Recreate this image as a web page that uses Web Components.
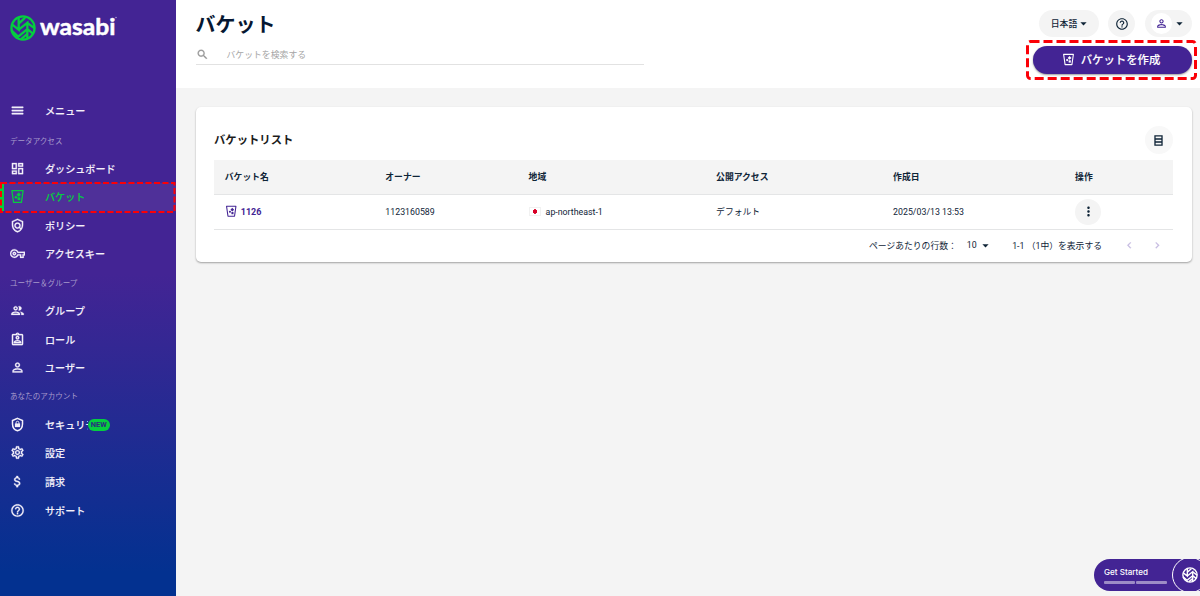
<!DOCTYPE html>
<html lang="ja">
<head>
<meta charset="utf-8">
<title>Wasabi</title>
<style>
  html, body { height: 100%; }
  body {
    margin: 0;
    overflow: hidden;
    background: #f4f4f4;
    color: #0f2437;
    font-family: Roboto, 'Noto Sans CJK JP', sans-serif;
    font-size: 8.8px;
  }
</style>
</head>
<body>
<console-app></console-app>

<script>
const icons = {
  menu: '<path d="M3 18h18v-2H3v2zm0-5h18v-2H3v2zm0-7v2h18V6H3z"/>',
  dashboard: '<path d="M19 5v2h-4V5h4M9 5v6H5V5h4m10 8v6h-4v-6h4M9 17v2H5v-2h4M21 3h-8v6h8V3zM11 3H3v10h8V3zm10 8h-8v10h8V11zm-10 4H3v6h8v-6z"/>',
  bucket: '<path fill="none" stroke="currentColor" stroke-width="2" stroke-linejoin="round" d="M3 2.500h18l-2.700 19H5.700z"/><path d="M14 5.500l3.500 3.500-3.500 3.500-3.500-3.500z"/><circle cx="9.500" cy="13" r="2"/><path d="M12.300 13.500h4v4.200h-4z"/>',
  policy: '<path d="M12 1L3 5v6c0 5.550 3.840 10.740 9 12 5.160-1.260 9-6.450 9-12V5l-9-4zm7 10c0 1.850-.51 3.650-1.380 5.210l-1.450-1.450c1.290-1.940 1.070-4.580-.64-6.290-1.950-1.950-5.120-1.950-7.070 0-1.950 1.950-1.950 5.120 0 7.070 1.710 1.710 4.350 1.920 6.290.64l1.720 1.720c-1.190 1.420-2.730 2.510-4.470 3.040C7.980 19.690 5 15.520 5 11V6.300l7-3.110 7 3.110V11zm-7 4c-1.660 0-3-1.340-3-3s1.340-3 3-3 3 1.340 3 3-1.340 3-3 3z"/>',
  key: '<path d="M22 19h-6v-4h-2.680c-1.140 2.420-3.600 4-6.320 4-3.860 0-7-3.140-7-7s3.140-7 7-7c2.720 0 5.170 1.580 6.320 4H24v6h-2v4zm-4-2h2v-4h2v-2H11.940l-.23-.67C11.010 8.340 9.110 7 7 7c-2.760 0-5 2.240-5 5s2.240 5 5 5c2.110 0 4.010-1.340 4.710-3.330l.23-.67H18v4zM7 15c-1.650 0-3-1.350-3-3s1.350-3 3-3 3 1.350 3 3-1.350 3-3 3zm0-4c-.55 0-1 .45-1 1s.45 1 1 1 1-.45 1-1-.45-1-1-1z"/>',
  group: '<path d="M9 13.750c-2.340 0-7 1.170-7 3.500V19h14v-1.750c0-2.330-4.660-3.500-7-3.500zM4.340 17c.84-.58 2.870-1.250 4.660-1.250s3.820.67 4.660 1.250H4.340zM9 12c1.930 0 3.500-1.570 3.500-3.500S10.930 5 9 5 5.500 6.570 5.500 8.500 7.070 12 9 12zm0-5c.83 0 1.500.67 1.500 1.500S9.830 10 9 10s-1.500-.67-1.500-1.500S8.170 7 9 7zm7.040 6.810c1.160.84 1.960 1.960 1.960 3.440V19h4v-1.750c0-2.020-3.500-3.170-5.960-3.440zM15 12c1.930 0 3.500-1.570 3.500-3.500S16.930 5 15 5c-.54 0-1.040.13-1.500.35.63.89 1 1.980 1 3.150s-.37 2.260-1 3.150c.46.22.96.35 1.500.35z"/>',
  role: '<path d="M19 3h-4.180C14.400 1.840 13.300 1 12 1s-2.400.84-2.820 2H5c-1.100 0-2 .9-2 2v14c0 1.100.9 2 2 2h14c1.100 0 2-.9 2-2V5c0-1.100-.9-2-2-2zm-7-.25c.22 0 .41.1.55.25.12.13.2.31.2.500 0 .41-.34.750-.750.750s-.750-.34-.750-.750c0-.19.080-.37.2-.5.14-.15.33-.25.55-.25zM19 19H5V5h14v14zM12 6c-1.650 0-3 1.350-3 3s1.350 3 3 3 3-1.350 3-3-1.350-3-3-3zm0 4c-.55 0-1-.45-1-1s.45-1 1-1 1 .45 1 1-.45 1-1 1zm-6 6.470V18h12v-1.530c0-2.500-3.970-3.580-6-3.580s-6 1.070-6 3.580zM8.310 16c.69-.56 2.380-1.120 3.690-1.120s3.010.56 3.690 1.120H8.310z"/>',
  user: '<path d="M12 6c1.100 0 2 .9 2 2s-.9 2-2 2-2-.9-2-2 .9-2 2-2m0 9c2.700 0 5.800 1.290 6 2v1H6v-.99c.2-.72 3.300-2.010 6-2.010m0-11C9.790 4 8 5.790 8 8s1.790 4 4 4 4-1.790 4-4-1.790-4-4-4zm0 9c-2.670 0-8 1.340-8 4v3h16v-3c0-2.660-5.330-4-8-4z"/>',
  security: '<path fill="none" stroke="currentColor" stroke-width="2.4" d="M12 2.100l8 3.550V11c0 5-3.400 9.600-8 10.900C7.400 20.600 4 16 4 11V5.650z"/><path d="M8 10.500h8V16H8z"/><path fill="none" stroke="currentColor" stroke-width="1.500" d="M9.800 11V9a2.200 2.200 0 0 1 4.400 0v2"/>',
  settings: '<path d="M19.430 12.980c.04-.32.070-.64.070-.98s-.03-.66-.07-.98l2.110-1.650c.19-.15.24-.42.12-.64l-2-3.460c-.12-.22-.39-.3-.61-.22l-2.490 1c-.52-.4-1.080-.73-1.690-.98l-.38-2.650C14.460 2.180 14.250 2 14 2h-4c-.25 0-.46.18-.49.42l-.38 2.650c-.61.25-1.170.59-1.690.98l-2.490-1c-.23-.09-.49 0-.61.22l-2 3.460c-.13.22-.07.49.12.64l2.110 1.650c-.04.32-.07.65-.07.98s.03.66.070.98l-2.110 1.650c-.19.15-.24.42-.12.64l2 3.460c.12.22.39.3.61.22l2.490-1c.52.4 1.080.73 1.690.98l.38 2.650c.03.24.24.42.49.42h4c.25 0 .46-.18.49-.42l.38-2.650c.61-.25 1.170-.59 1.690-.98l2.490 1c.23.09.49 0 .61-.22l2-3.460c.12-.22.07-.49-.12-.64l-2.110-1.650zm-1.980-1.710c.04.31.050.520.050.73s-.02.43-.05.73l-.14 1.130.89.7 1.080.84-.7 1.210-1.270-.51-1.040-.42-.9.680c-.43.32-.84.56-1.250.73l-1.060.43-.16 1.130-.2 1.350h-1.400l-.19-1.350-.16-1.130-1.060-.43c-.43-.18-.83-.41-1.230-.71l-.91-.7-1.060.43-1.270.51-.7-1.210 1.080-.84.89-.7-.14-1.130c-.03-.31-.05-.54-.05-.74s.02-.43.05-.73l.14-1.130-.89-.7-1.080-.84.7-1.210 1.270.51 1.040.42.9-.68c.43-.32.84-.56 1.250-.73l1.060-.43.16-1.130.2-1.350h1.390l.19 1.350.16 1.130 1.060.43c.43.18.83.41 1.230.71l.91.7 1.060-.43 1.270-.51.7 1.210-1.070.85-.89.7.14 1.130zM12 8c-2.210 0-4 1.790-4 4s1.790 4 4 4 4-1.790 4-4-1.790-4-4-4zm0 6c-1.100 0-2-.9-2-2s.9-2 2-2 2 .9 2 2-.9 2-2 2z"/>',
  billing: '<path d="M11.800 10.900c-2.270-.59-3-1.200-3-2.150 0-1.090 1.010-1.850 2.700-1.850 1.780 0 2.440.85 2.500 2.100h2.210c-.07-1.720-1.120-3.300-3.210-3.810V3h-3v2.160c-1.940.42-3.500 1.680-3.500 3.610 0 2.310 1.910 3.460 4.700 4.130 2.500.6 3 1.480 3 2.410 0 .69-.49 1.790-2.700 1.790-2.060 0-2.870-.92-2.980-2.100h-2.200c.12 2.190 1.760 3.420 3.680 3.830V21h3v-2.150c1.950-.37 3.500-1.500 3.500-3.550 0-2.840-2.430-3.810-4.700-4.400z"/>',
  help: '<path d="M11 18h2v-2h-2v2zm1-16C6.480 2 2 6.480 2 12s4.480 10 10 10 10-4.480 10-10S17.520 2 12 2zm0 18c-4.410 0-8-3.590-8-8s3.590-8 8-8 8 3.590 8 8-3.590 8-8 8zm0-14c-2.210 0-4 1.790-4 4h2c0-1.100.9-2 2-2s2 .9 2 2c0 2-3 1.750-3 5h2c0-2.250 3-2.500 3-5 0-2.210-1.790-4-4-4z"/>',
  search: '<path d="M15.500 14h-.79l-.28-.27C15.410 12.590 16 11.110 16 9.500 16 5.910 13.090 3 9.500 3S3 5.910 3 9.500 5.910 16 9.500 16c1.610 0 3.090-.59 4.230-1.570l.27.28v.79l5 4.990L20.490 19l-4.990-5zm-6 0C7.010 14 5 11.990 5 9.500S7.010 5 9.500 5 14 7.010 14 9.500 11.990 14 9.500 14z"/>',
  caret: '<path d="M7 10l5 5 5-5z"/>',
  rows: '<path fill="none" stroke="currentColor" stroke-width="2.4" d="M5.500 3.500h13v17h-13zM5.500 9.200h13M5.500 14.800h13"/>',
  more: '<path d="M12 8c1.100 0 2-.9 2-2s-.9-2-2-2-2 .9-2 2 .9 2 2 2zm0 2c-1.100 0-2 .9-2 2s.9 2 2 2 2-.9 2-2-.9-2-2-2zm0 6c-1.100 0-2 .9-2 2s.9 2 2 2 2-.9 2-2-.9-2-2-2z"/>',
  prev: '<path d="M15.410 7.410L14 6l-6 6 6 6 1.410-1.410L10.830 12z"/>',
  next: '<path d="M10 6L8.590 7.410 13.170 12l-4.580 4.590L10 18l6-6z"/>',
  leaf: '<g fill="none" stroke="currentColor" stroke-width="2.100"><circle cx="12" cy="12" r="10.700"/><path d="M1.500 8.500l6.500 5V2.500M8 8l6-5.500M1.500 14.500l6 5.500 8.500-7M8 13.500l8-6.300v14.500M16 7.200l6.500 5M16 13l5.500 4.500M10.500 22l5.500-4.500"/></g>'
};

class UiIcon extends HTMLElement {
  constructor() {
    super();
    this.attachShadow({ mode: 'open' });
  }

  connectedCallback() {
    this.shadowRoot.innerHTML = `
      <style>
        :host { display: inline-block; flex: none; width: var(--size, 14px); height: var(--size, 14px); }
        svg {
          display: block;
          width: 100%;
          height: 100%;
          fill: currentColor;
          stroke: currentColor;
          stroke-width: var(--bold, 0);
        }
      </style>
      <svg viewBox="0 0 24 24">${icons[this.getAttribute('name')]}</svg>
    `;
  }
}
customElements.define('ui-icon', UiIcon);

// Defines an element whose shadow root is cloned from the given markup
function define(name, html) {
  const template = document.createElement('template');
  template.innerHTML = html;

  customElements.define(name, class extends HTMLElement {
    constructor() {
      super();
      this.attachShadow({ mode: 'open' });
      this.shadowRoot.appendChild(template.content.cloneNode(true));
    }
  });
}

define('brand-logo', `
  <style>
    :host { display: flex; align-items: center; height: 28px; padding: 13.5px 0 .5px 10px; color: #fff; }
    ui-icon { --size: 26px; color: #05ce3f; }
    svg { display: block; margin-left: 3px; overflow: visible; }
    text {
      font-family: Lato, sans-serif;
      font-weight: 700;
      fill: #fff;
      stroke: #fff;
      stroke-width: .5;
      stroke-linejoin: round;
    }
  </style>
  <ui-icon name="leaf"></ui-icon>
  <svg width="80" height="28">
    <text x="1" y="20.5" font-size="23" textLength="75.5" lengthAdjust="spacingAndGlyphs">wasabi</text>
    <circle cx="77" cy="3.5" r=".8" fill="#a99bd0"/>
  </svg>
`);

define('nav-label', `
  <style>
    :host {
      display: flex;
      align-items: center;
      height: 28.5px;
      padding-left: 10px;
      font-size: 7.55px;
      color: #a69acb;
    }
  </style>
  <slot></slot>
`);

define('nav-item', `
  <style>
    :host {
      display: flex;
      align-items: center;
      box-sizing: border-box;
      position: relative;
      height: 28.4px;
      padding-left: 10px;
      font-size: 10.1px;
      font-weight: 500;
      color: #f3f0fa;
      white-space: nowrap;
      -webkit-text-stroke: .1px currentColor;
      --bold: .4;
    }
    :host([active]) {
      color: #05ce3f;
      background: #4f3099;
    }
    :host([active])::before {
      content: '';
      position: absolute;
      left: 0;
      top: 0;
      bottom: 0;
      width: 4px;
      background: #05ce3f;
    }
    ::slotted(ui-icon) { --size: 15px; margin-right: 20px; }
    ::slotted(.new) {
      position: absolute;
      left: 87.5px;
      top: 9px;
      width: 22.5px;
      height: 11.5px;
      border-radius: 6px;
      background: #05ce3f;
      color: #2b2c80;
      font: 700 7.4px/12px Roboto, sans-serif;
      text-align: center;
      -webkit-text-stroke: 0;
    }
  </style>
  <slot name="icon"></slot>
  <slot></slot>
  <slot name="badge"></slot>
`);

define('side-nav', `
  <style>
    :host {
      display: block;
      position: relative;
      width: 176px;
      height: 596px;
      box-sizing: border-box;
      background: linear-gradient(#432494 0, #432494 46%, #033190 96%);
    }
    nav { display: flex; flex-direction: column; padding-top: 54px; }
    .hit {
      position: absolute;
      left: 1px;
      top: 182px;
      z-index: 1;
      overflow: visible;
    }
    .clip { display: inline-block; width: 42.5px; overflow: hidden; }
    .menu { margin-bottom: 1.5px; --bold: .8; }
    .support { margin-top: 1.3px; }
  </style>
  <brand-logo></brand-logo>
  <nav>
    <nav-item class="menu"><ui-icon slot="icon" name="menu"></ui-icon>メニュー</nav-item>
    <nav-label>データアクセス</nav-label>
    <nav-item><ui-icon slot="icon" name="dashboard"></ui-icon>ダッシュボード</nav-item>
    <nav-item active><ui-icon slot="icon" name="bucket"></ui-icon>バケット</nav-item>
    <nav-item><ui-icon slot="icon" name="policy"></ui-icon>ポリシー</nav-item>
    <nav-item><ui-icon slot="icon" name="key"></ui-icon>アクセスキー</nav-item>
    <nav-label>ユーザー＆グループ</nav-label>
    <nav-item><ui-icon slot="icon" name="group"></ui-icon>グループ</nav-item>
    <nav-item><ui-icon slot="icon" name="role"></ui-icon>ロール</nav-item>
    <nav-item><ui-icon slot="icon" name="user"></ui-icon>ユーザー</nav-item>
    <nav-label>あなたのアカウント</nav-label>
    <nav-item><ui-icon slot="icon" name="security"></ui-icon><span class="clip">セキュリテ</span><span class="new" slot="badge">NEW</span></nav-item>
    <nav-item><ui-icon slot="icon" name="settings"></ui-icon>設定</nav-item>
    <nav-item><ui-icon slot="icon" name="billing"></ui-icon>請求</nav-item>
    <nav-item class="support"><ui-icon slot="icon" name="help"></ui-icon>サポート</nav-item>
  </nav>
  <svg class="hit" width="174" height="31">
    <rect x="0" y="1" width="173.5" height="29" fill="none" stroke="#fb0007" stroke-width="2" stroke-dasharray="6 2.5"/>
  </svg>
`);

define('pill-button', `
  <style>
    :host {
      display: flex;
      align-items: center;
      justify-content: center;
      box-sizing: border-box;
      height: 27px;
      border-radius: 14px;
      background: #f4f4f4;
      font-size: 8.8px;
      font-weight: 500;
    }
  </style>
  <slot></slot>
`);

define('create-button', `
  <style>
    :host { display: block; position: relative; width: 159px; height: 28px; }
    button {
      display: flex;
      align-items: center;
      justify-content: center;
      gap: 6px;
      width: 100%;
      height: 100%;
      padding: 0 2px 1px 0;
      border: 0;
      border-radius: 14px;
      background: #432494;
      box-shadow: 0 1px 2px rgba(0, 0, 0, .4);
      color: #fff;
      font: inherit;
      font-size: 11.4px;
      font-weight: 500;
      -webkit-text-stroke: .1px currentColor;
    }
    ui-icon { --size: 13px; }
    slot { display: block; margin-top: -1px; }
    svg { position: absolute; left: -7px; top: -6px; overflow: visible; }
  </style>
  <button><ui-icon name="bucket"></ui-icon><slot></slot></button>
  <svg width="171" height="40">
    <rect x="1.5" y="1.5" width="168" height="37" rx="3" fill="none" stroke="#fb0007" stroke-width="3" stroke-dasharray="9 4"/>
  </svg>
`);

define('page-header', `
  <style>
    :host {
      display: flex;
      justify-content: space-between;
      box-sizing: border-box;
      height: 88px;
      padding: 0 8.5px 0 19.5px;
      background: #fff;
    }
    h1 { margin: 10px 0 0; font-size: 20px; line-height: 30px; font-weight: 700; color: #061732; }
    .search {
      display: flex;
      align-items: center;
      gap: 18px;
      box-sizing: border-box;
      width: 448px;
      height: 19px;
      margin-top: 6px;
      padding-bottom: 1.5px;
      border-bottom: 1px solid #e2e2e2;
      color: #a6a6a6;
      font-size: 8.85px;
    }
    .search ui-icon { --size: 13px; --bold: .5; color: #969696; }
    .right { display: flex; flex-direction: column; align-items: flex-end; padding-top: 10px; }
    .tools { display: flex; gap: 9.5px; margin: 0 0 9px; }
    .lang { width: 60px; padding-left: 5px; }
    .lang ui-icon, .account > ui-icon { --size: 15px; }
    .lang ui-icon { margin-left: -1px; }
    .help { width: 27px; --size: 14px; }
    .account { width: 47px; justify-content: flex-start; }
    .avatar {
      display: flex;
      align-items: center;
      justify-content: center;
      width: 21px;
      height: 21px;
      margin: 0 0 0 6px;
      border-radius: 50%;
      background: #fff;
      color: #432494;
      --size: 13px;
    }
  </style>
  <div>
    <h1>バケット</h1>
    <div class="search"><ui-icon name="search"></ui-icon>バケットを検索する</div>
  </div>
  <div class="right">
    <div class="tools">
      <pill-button class="lang">日本語<ui-icon name="caret"></ui-icon></pill-button>
      <pill-button class="help"><ui-icon name="help"></ui-icon></pill-button>
      <pill-button class="account"><span class="avatar"><ui-icon name="user"></ui-icon></span><ui-icon name="caret"></ui-icon></pill-button>
    </div>
    <create-button>バケットを作成</create-button>
  </div>
`);

define('bucket-table', `
  <style>
    :host { display: block; }
    .row {
      display: grid;
      grid-template-columns: 160.5px 143.3px 187.5px 177px 182px 1fr;
      align-items: center;
      box-sizing: border-box;
      height: 35px;
      padding: 0 0 1px 10.8px;
      border-bottom: 1px solid #e4e5e6;
    }
    .head { background: #f4f4f4; font-weight: 700; }
    .cell { display: flex; align-items: center; }
    .name { color: #432494; font-weight: 700; font-size: 9px; gap: 3.5px; --size: 12.5px; }
    .flag {
      width: 10px;
      height: 7px;
      margin-right: 5px;
      background: radial-gradient(circle, #d80027 2px, #fff 2.5px);
      border: .5px solid #f1f1f1;
    }
    .more {
      display: flex;
      align-items: center;
      justify-content: center;
      width: 26px;
      height: 26px;
      border-radius: 50%;
      background: #f4f4f4;
      --size: 15px;
    }
  </style>
  <div class="row head">
    <span>バケット名</span><span>オーナー</span><span>地域</span><span>公開アクセス</span><span>作成日</span><span>操作</span>
  </div>
  <div class="row">
    <span class="cell name"><ui-icon name="bucket"></ui-icon>1126</span>
    <span>1123160589</span>
    <span class="cell"><i class="flag"></i>ap-northeast-1</span>
    <span>デフォルト</span>
    <span>2025/03/13 13:53</span>
    <span class="more"><ui-icon name="more"></ui-icon></span>
  </div>
`);

define('table-pager', `
  <style>
    :host { display: flex; align-items: center; justify-content: flex-end; height: 30px; padding-right: 9px; }
    .count { margin-left: 10px; }
    .caret { --size: 15px; margin: 0 19.5px 0 1px; }
    .arrows { display: flex; gap: 16px; margin-left: 20.5px; color: #c4bae0; --size: 12.5px; --bold: .5; }
  </style>
  <span>ページあたりの行数：</span>
  <span class="count">10</span>
  <ui-icon class="caret" name="caret"></ui-icon>
  <span>1-1 （1中）を表示する</span>
  <span class="arrows"><ui-icon name="prev"></ui-icon><ui-icon name="next"></ui-icon></span>
`);

define('bucket-card', `
  <style>
    :host {
      display: block;
      box-sizing: border-box;
      height: 155px;
      margin: 19px 8.5px 0 19.5px;
      padding: 19px 19px 0 18.5px;
      border-radius: 5px;
      background: #fff;
      box-shadow: 0 1px 2px rgba(0, 0, 0, .35);
    }
    header { display: flex; align-items: center; justify-content: space-between; height: 28px; margin-bottom: 6px; }
    h2 { margin: 0; padding-bottom: 2px; font-size: 11.35px; font-weight: 700; color: #1c1c1c; }
    .view {
      display: flex;
      align-items: center;
      justify-content: center;
      width: 28px;
      height: 28px;
      border-radius: 50%;
      background: #f8f8f8;
      --size: 13px;
    }
  </style>
  <header><h2>バケットリスト</h2><span class="view"><ui-icon name="rows"></ui-icon></span></header>
  <bucket-table></bucket-table>
  <table-pager></table-pager>
`);

define('get-started', `
  <style>
    :host {
      display: flex;
      position: absolute;
      right: 0;
      bottom: 5px;
      box-sizing: border-box;
      width: 106px;
      height: 32px;
      padding: 8px 0 0 10px;
      border-radius: 16px 0 0 16px;
      overflow: hidden;
      background: #432494;
      color: #fff;
      font: 500 8.1px/11px Inter, 'Liberation Sans', sans-serif;
      white-space: nowrap;
    }
    .bars { display: flex; gap: 1px; margin-top: 3px; }
    .bars i { width: 31px; height: 2.5px; border-radius: 1px; background: #9d8cc6; }
    .badge {
      position: absolute;
      left: 78px;
      top: -2px;
      display: flex;
      align-items: center;
      box-sizing: border-box;
      width: 36px;
      height: 36px;
      padding-left: 9px;
      border: 1.5px solid #fff;
      border-radius: 50%;
      --size: 16px;
    }
  </style>
  <div>
    <slot></slot>
    <div class="bars"><i></i><i></i></div>
  </div>
  <span class="badge"><ui-icon name="leaf"></ui-icon></span>
`);

define('console-app', `
  <style>
    :host { display: grid; grid-template-columns: 176px 1fr; height: 596px; position: relative; }
  </style>
  <side-nav></side-nav>
  <main>
    <page-header></page-header>
    <bucket-card></bucket-card>
  </main>
  <get-started>Get Started</get-started>
`);
</script>
</body>
</html>
